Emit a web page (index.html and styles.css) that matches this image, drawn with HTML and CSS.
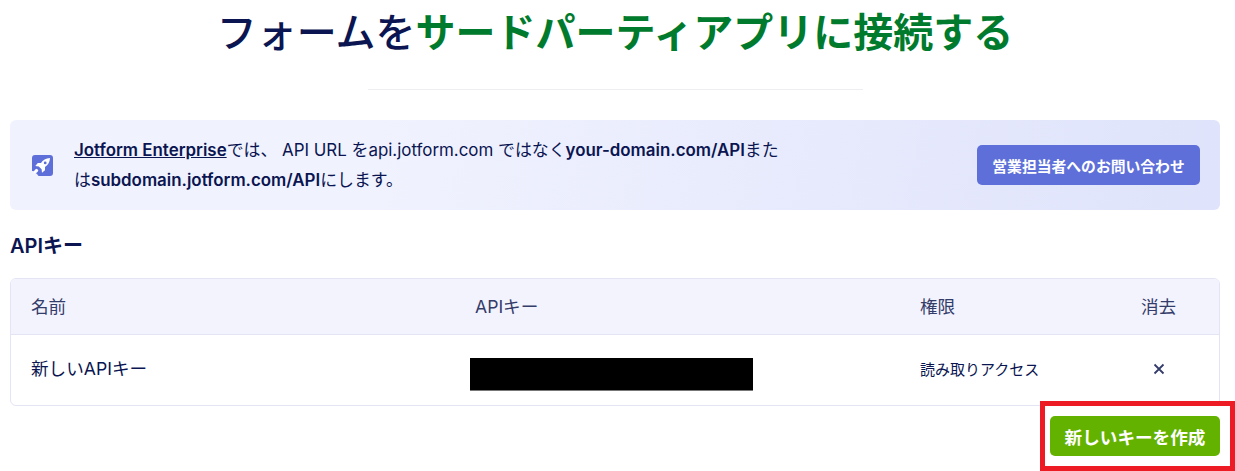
FILE: index.html
```html
<!DOCTYPE html>
<html lang="ja">
<head>
<meta charset="utf-8">
<title>API</title>
<link rel="stylesheet" href="styles.css">
</head>
<body>
<main class="page">
  <h1 class="title">フォームを<span class="title-accent">サードパーティアプリに接続する</span></h1>
  <hr class="divider">
  <section class="banner">
    <svg class="rocket" viewBox="0 0 21 21" aria-hidden="true">
      <path fill="#5e6fd9" d="M3 0h15a3 3 0 0 1 3 3v15a3 3 0 0 1-3 3H6.500L5 19l-2-1.500L1.500 16H0V3a3 3 0 0 1 3-3z"/>
      <path fill="#fff" d="M18 3c-4.200.2-7.200 1.900-9 5H5.800L3.300 11l3.500.4 2.800 2.800.4 3.500 3-2.500v-3.200c3.200-1.900 4.800-5 5-9z"/>
      <path fill="#fff" d="M4.800 13.800C3 14.200 1.800 15.500 1.500 18.600c3.100-.3 4.400-1.500 4.800-3.300z"/>
      <circle cx="13.200" cy="7.900" r="1.400" fill="#5e6fd9"/>
    </svg>
    <p class="banner-text"><a class="banner-link" href="#">Jotform Enterprise</a>では、 API URL をapi.jotform.com ではなく<b>your-domain.com/API</b>または<b>subdomain.jotform.com/API</b>にします。</p>
    <a class="btn btn-contact" href="#">営業担当者へのお問い合わせ</a>
  </section>
  <h2 class="section-title">APIキー</h2>
  <div class="table">
    <div class="row row-head">
      <div class="cell">名前</div>
      <div class="cell">APIキー</div>
      <div class="cell">権限</div>
      <div class="cell cell-center">消去</div>
    </div>
    <div class="row row-body">
      <div class="cell cell-name">新しいAPIキー</div>
      <div class="cell cell-key"><div class="redaction"></div></div>
      <div class="cell cell-small">読み取りアクセス</div>
      <div class="cell cell-center">
        <svg class="close" viewBox="0 0 12 12" aria-hidden="true"><path d="M1.500 1.500l9 9M10.500 1.500l-9 9"/></svg>
      </div>
    </div>
  </div>
  <div class="actions">
    <a class="btn btn-create" href="#">新しいキーを作成</a>
    <div class="highlight"></div>
  </div>
</main>
</body>
</html>
```
FILE: styles.css
```css
* { box-sizing: border-box; }
html, body { margin: 0; background: #fff; }
body {
  height: 471px;
  overflow: hidden;
  font-family: "Inter", "Noto Sans CJK JP", sans-serif;
  color: #0a1551;
}
.page { padding: 0 15px 0 10px; }
.title {
  margin: 0;
  height: 66px;
  font-size: 40px;
  line-height: 66px;
  font-weight: 500;
  text-align: center;
  color: #0a1551;
}
.title-accent { color: #007b2d; font-weight: 700; }
.divider {
  width: 495px;
  height: 1px;
  margin: 23px auto 30px;
  border: 0;
  background: #eceef2;
}
.banner {
  display: flex;
  align-items: center;
  height: 90px;
  padding: 0 20px 0 22px;
  border-radius: 6px;
  background: linear-gradient(100deg, #f0f2fe 30%, #dfe3fb 100%);
}
.rocket { flex: none; width: 21px; height: 21px; margin-right: 21px; }
.banner-text {
  width: 710px;
  margin: 0;
  font-size: 16.9px;
  line-height: 30px;
  color: #0a1551;
}
.banner-text b { font-weight: 600; }
.banner-link { color: inherit; font-weight: 600; text-decoration: underline; }
.btn {
  display: flex;
  align-items: center;
  justify-content: center;
  height: 40px;
  border-radius: 5px;
  color: #fff;
  text-decoration: none;
  font-weight: 500;
}
.btn-contact {
  width: 223px;
  margin-left: auto;
  background: #5e6fd9;
  font-size: 14.8px;
  font-weight: 600;
}
.section-title {
  margin: 24px 0 20px;
  font-size: 20px;
  line-height: 24px;
  font-weight: 600;
}
.table {
  width: 1210px;
  border: 1px solid #e3e5f5;
  border-radius: 6px;
  overflow: hidden;
}
.row {
  display: grid;
  grid-template-columns: 444px 445px 198px 1fr;
  align-items: center;
}
.row-head {
  height: 56px;
  padding-bottom: 3px;
  background: #f3f3fe;
  border-bottom: 1px solid #e3e5f5;
  color: #343c6a;
  font-size: 17.6px;
}
.row-body { height: 70px; padding-bottom: 3px; font-size: 17.6px; }
.cell { padding-left: 20px; }
.cell-name { padding-bottom: 2px; }
.cell-center { padding-left: 0; text-align: center; }
.cell-small { font-size: 15px; }
.cell-key { padding-left: 15px; }
.redaction { width: 283px; height: 33px; margin-top: 11px; background: #000; border-bottom: 1px solid #777; }
.close {
  display: block;
  width: 12px;
  height: 12px;
  margin: 1px auto 0;
  fill: none;
  stroke: #343c6a;
  stroke-width: 1.800;
}
.actions { position: relative; display: flex; justify-content: flex-end; width: 1210px; margin-top: 10px; }
.btn-create {
  width: 170px;
  background: #64b200;
  font-size: 17.6px;
  font-weight: 700;
}
.highlight {
  position: absolute;
  top: -15px;
  left: 1030px;
  width: 195px;
  height: 70px;
  border: 5px solid #ed1c24;
}
```
